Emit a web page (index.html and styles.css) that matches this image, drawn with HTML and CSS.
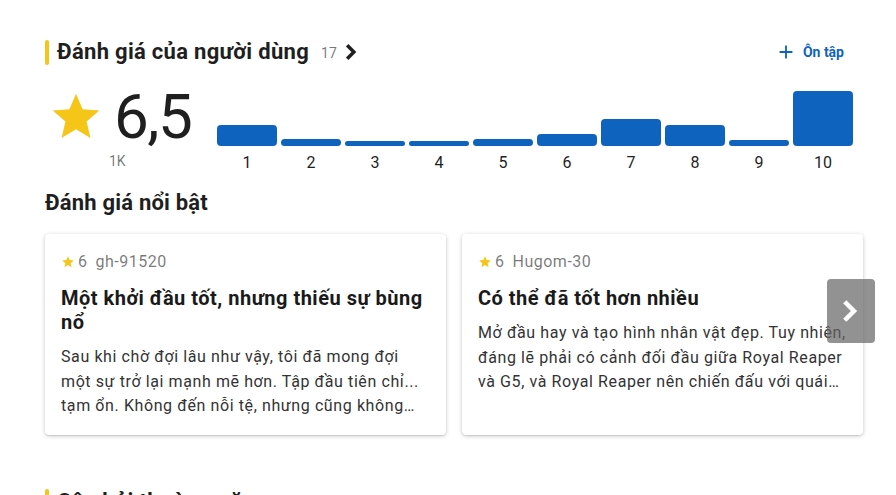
FILE: index.html
```html
<!DOCTYPE html>
<html lang="vi">
<head>
<meta charset="utf-8">
<link rel="stylesheet" href="styles.css">
</head>
<body>
<div class="page">
  <section class="section">
    <div class="head-row">
      <h2 class="title"><span class="bar-mark"></span>Đánh giá của người dùng<span class="count">17</span>
        <svg class="chev" viewBox="0 0 24 24" width="28" height="28"><path d="M8.9 5.2l-2.1 2.1 4.7 4.7-4.7 4.7 2.1 2.1 6.8-6.8z" fill="#1f1f1f"/></svg>
      </h2>
      <a class="add-btn"><svg viewBox="0 0 24 24" width="24" height="24"><path d="M11 5h2v6h6v2h-6v6h-2v-6H5v-2h6z" fill="#0e63be"/></svg>Ôn tập</a>
    </div>

    <div class="rating-row">
      <div class="score">
        <div class="score-main">
          <svg class="big-star" viewBox="0 0 24 24" width="56" height="56"><path d="M12 17.27L18.18 21l-1.64-7.03L22 9.24l-7.19-.61L12 2 9.19 8.63 2 9.24l5.46 4.73L5.82 21z" fill="#f5c518"/></svg>
          <span class="score-num">6,5</span>
        </div>
        <div class="score-votes">1K</div>
      </div>
      <div class="hist">
        <div class="col"><div class="hbar" style="height:21px"></div><span>1</span></div>
        <div class="col"><div class="hbar" style="height:7px"></div><span>2</span></div>
        <div class="col"><div class="hbar" style="height:5px"></div><span>3</span></div>
        <div class="col"><div class="hbar" style="height:5px"></div><span>4</span></div>
        <div class="col"><div class="hbar" style="height:7px"></div><span>5</span></div>
        <div class="col"><div class="hbar" style="height:12px"></div><span>6</span></div>
        <div class="col"><div class="hbar" style="height:27px"></div><span>7</span></div>
        <div class="col"><div class="hbar" style="height:21px"></div><span>8</span></div>
        <div class="col"><div class="hbar" style="height:6px"></div><span>9</span></div>
        <div class="col"><div class="hbar" style="height:55px"></div><span>10</span></div>
      </div>
    </div>

    <h3 class="subtitle">Đánh giá nổi bật</h3>

    <div class="cards">
      <article class="card">
        <div class="meta"><svg viewBox="0 0 24 24" width="14" height="14"><path d="M12 17.27L18.18 21l-1.64-7.03L22 9.24l-7.19-.61L12 2 9.19 8.63 2 9.24l5.46 4.73L5.82 21z" fill="#f5c518"/></svg><span class="m-rate">6</span><span class="m-user">gh-91520</span></div>
        <h4 class="card-title">Một khởi đầu tốt, nhưng thiếu sự bùng nổ</h4>
        <p class="card-body">Sau khi chờ đợi lâu như vậy, tôi đã mong đợi một sự trở lại mạnh mẽ hơn. Tập đầu tiên chỉ... tạm ổn. Không đến nỗi tệ, nhưng cũng không thực sự bùng nổ như tôi hy vọng.</p>
      </article>
      <article class="card">
        <div class="meta"><svg viewBox="0 0 24 24" width="14" height="14"><path d="M12 17.27L18.18 21l-1.64-7.03L22 9.24l-7.19-.61L12 2 9.19 8.63 2 9.24l5.46 4.73L5.82 21z" fill="#f5c518"/></svg><span class="m-rate">6</span><span class="m-user">Hugom-30</span></div>
        <h4 class="card-title">Có thể đã tốt hơn nhiều</h4>
        <p class="card-body">Mở đầu hay và tạo hình nhân vật đẹp. Tuy nhiên, đáng lẽ phải có cảnh đối đầu giữa Royal Reaper và G5, và Royal Reaper nên chiến đấu với quái vật nhiều hơn nữa.</p>
      </article>
      <button class="next"><svg viewBox="0 0 24 24" width="40" height="40"><path d="M9.2 5.5l-1.9 1.9 4.6 4.6-4.6 4.6 1.9 1.9 6.5-6.5z" fill="#fff"/></svg></button>
    </div>
  </section>

  <section class="section next-section">
    <h2 class="title"><span class="bar-mark"></span>Câu hỏi thường gặp</h2>
  </section>
</div>
</body>
</html>
```

FILE: styles.css
```css
* { box-sizing: border-box; }
html, body { margin: 0; padding: 0; background: #fff; overflow: hidden; }
body {
  font-family: Roboto, "Noto Sans", "Liberation Sans", sans-serif;
  color: #1f1f1f;
  width: 896px;
  height: 495px;
}
.page { padding: 36px 32px 0 45px; height: 495px; overflow: hidden; }
.head-row {
  display: flex;
  align-items: center;
  justify-content: space-between;
  height: 32px;
}
.title {
  display: flex;
  align-items: center;
  margin: 0;
  font-size: 22px;
  font-weight: 700;
  line-height: 28px;
  letter-spacing: 0.3px;
  color: #1f1f1f;
}
.bar-mark {
  width: 4px;
  height: 25px;
  background: #f5c518;
  border-radius: 2px;
  margin-right: 8px;
}
.count {
  font-size: 14px;
  font-weight: 400;
  letter-spacing: 0;
  color: rgba(0,0,0,.54);
  margin-left: 12px;
  margin-top: 2px;
}
.chev { margin-left: 1px; }
.add-btn {
  display: flex;
  align-items: center;
  gap: 6px;
  color: #0e63be;
  font-size: 14px;
  font-weight: 700;
  padding-right: 20px;
}
.add-btn svg { width: 22px; height: 22px; }

.rating-row {
  display: flex;
  align-items: flex-start;
  margin-top: 21px;
}
.score {
  display: flex;
  flex-direction: column;
  width: 172px;
}
.score-main { display: flex; align-items: center; height: 56px; }
.big-star { margin-right: 10px; margin-left: 3px; }
.score-num {
  font-size: 62px;
  font-weight: 400;
  line-height: 56px;
  letter-spacing: -1.5px;
  color: #1f1f1f;
}
.score-votes {
  margin-top: 6px;
  margin-left: 64px;
  font-size: 14px;
  color: rgba(0,0,0,.54);
  line-height: 20px;
}
.hist {
  display: flex;
  gap: 4px;
  height: 86px;
}
.col {
  width: 60px;
  display: flex;
  flex-direction: column;
  justify-content: flex-end;
  align-items: center;
}
.hbar {
  width: 60px;
  background: #0e63be;
  border-radius: 4px;
}
.col span {
  font-size: 16px;
  line-height: 24px;
  margin-top: 5px;
  color: #1f1f1f;
}
.subtitle {
  margin: 14px 0 0;
  font-size: 22px;
  font-weight: 700;
  line-height: 28px;
  letter-spacing: 0.2px;
}
.cards {
  position: relative;
  display: flex;
  gap: 16px;
  margin-top: 17px;
}
.card {
  width: 401px;
  flex: 0 0 401px;
  padding: 16px;
  background: #fff;
  border-radius: 4px;
  box-shadow: 0 1px 4px rgba(0,0,0,.22), 0 1px 1px rgba(0,0,0,.08);
}
.meta {
  display: flex;
  align-items: center;
  font-size: 16px;
  line-height: 24px;
  letter-spacing: 0.5px;
  color: rgba(0,0,0,.54);
}
.meta svg { margin-right: 3px; }
.m-user { margin-left: 8px; }
.card-title {
  margin: 12px 0 0;
  font-size: 20px;
  font-weight: 700;
  line-height: 24px;
  letter-spacing: 0.5px;
  color: #1a1a1a;
}
.card-body {
  margin: 11px 0 0;
  font-size: 16px;
  line-height: 24.5px;
  letter-spacing: 0.6px;
  color: #333;
  display: -webkit-box;
  -webkit-line-clamp: 3;
  -webkit-box-orient: vertical;
  overflow: hidden;
}
.next {
  position: absolute;
  left: 782px;
  top: 45px;
  width: 48px;
  height: 64px;
  border: 0;
  border-radius: 4px;
  background: rgba(100,100,100,.7);
  display: flex;
  align-items: center;
  justify-content: center;
  padding: 0;
}
.next-section { margin-top: 53px; }
```
